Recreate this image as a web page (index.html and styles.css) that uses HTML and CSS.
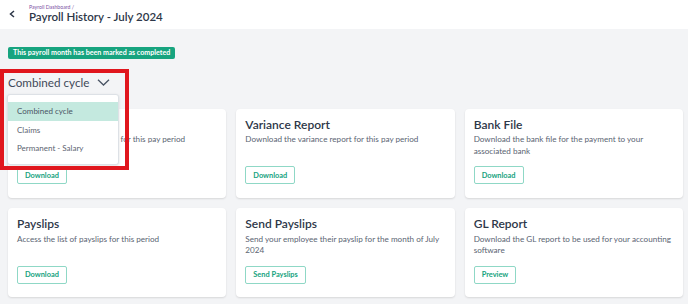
FILE: index.html
```html
<!DOCTYPE html>
<html lang="en">
<head>
  <meta charset="UTF-8" />
  <title>Payroll History - July 2024</title>
  <link rel="stylesheet" href="styles.css">
</head>
<body>
  <header class="topbar">
    <span class="back">
      <svg width="7" height="8" viewBox="0 0 7 8"><path d="M5 1 L1.5 4 L5 7" fill="none" stroke="#2d3748" stroke-width="1.5"/></svg>
    </span>
    <div class="heading">
      <div class="crumb">Payroll Dashboard /</div>
      <h1>Payroll History - July 2024</h1>
    </div>
  </header>

  <main class="content">
    <div class="badge">This payroll month has been marked as completed</div>

    <div class="cycle">
      <div class="cycle-label">
        Combined cycle
        <svg width="13" height="7" viewBox="0 0 13 7"><path d="M1 0.8 L6.5 6 L12 0.8" fill="none" stroke="#4a5565" stroke-width="1.3"/></svg>
      </div>
      <ul class="menu">
        <li class="active">Combined cycle</li>
        <li>Claims</li>
        <li>Permanent - Salary</li>
      </ul>
      <div class="mark"></div>
    </div>

    <section class="cards">
      <div class="card">
        <h2>Payroll Record</h2>
        <p>Download the payroll record for this pay period</p>
        <button>Download</button>
      </div>
      <div class="card">
        <h2>Variance Report</h2>
        <p>Download the variance report for this pay period</p>
        <button>Download</button>
      </div>
      <div class="card">
        <h2>Bank File</h2>
        <p>Download the bank file for the payment to your associated bank</p>
        <button>Download</button>
      </div>
      <div class="card">
        <h2>Payslips</h2>
        <p>Access the list of payslips for this period</p>
        <button>Download</button>
      </div>
      <div class="card">
        <h2>Send Payslips</h2>
        <p>Send your employee their payslip for the month of July 2024</p>
        <button>Send Payslips</button>
      </div>
      <div class="card">
        <h2>GL Report</h2>
        <p>Download the GL report to be used for your accounting software</p>
        <button>Preview</button>
      </div>
    </section>
  </main>
</body>
</html>
```

FILE: styles.css
```css
body {
  margin: 0;
  font-family: Lato, "Open Sans", sans-serif;
  background: #f3f4f6;
  color: #2d3748;
}
.topbar {
  display: flex;
  align-items: flex-start;
  height: 29px;
  background: #fff;
  padding-left: 9px;
  box-sizing: border-box;
}
.back {
  width: 20px;
  padding-top: 10px;
  line-height: 0;
}
.heading {
  padding-top: 4px;
}
.crumb {
  font-size: 5.2px;
  line-height: 6px;
  color: #7a4fa3;
}
h1 {
  margin: 0;
  font-size: 11.5px;
  line-height: 14px;
  font-weight: 600;
  color: #2d3748;
}
.content {
  padding: 18px 5px 8px 8px;
}
.badge {
  width: fit-content;
  background: #17a47f;
  color: #fff;
  font-size: 7.1px;
  font-weight: 700;
  line-height: 12px;
  padding: 0 5px;
  border-radius: 2px;
}
.cycle {
  position: relative;
  height: 20px;
  margin: 13px 0 16.5px;
}
.cycle-label {
  display: flex;
  align-items: center;
  gap: 8px;
  font-size: 11.7px;
  line-height: 20px;
  color: #3f4a59;
}
.menu {
  position: absolute;
  left: -1px;
  top: 22px;
  z-index: 2;
  width: 112px;
  margin: 0;
  padding: 7px 0 6px;
  list-style: none;
  background: #fff;
  border: 1px solid #dde1e6;
  border-radius: 3px;
  box-shadow: 0 1px 3px rgba(0,0,0,0.12);
  box-sizing: border-box;
}
.menu li {
  height: 18.7px;
  line-height: 18.7px;
  padding-left: 9px;
  font-size: 8px;
  color: #5c6470;
}
.menu li.active {
  background: #c4e9df;
  color: #4a5565;
}
.mark {
  position: absolute;
  left: -8px;
  top: -3px;
  width: 129px;
  height: 101px;
  border: 4px solid #e0161d;
  box-sizing: border-box;
  z-index: 3;
}
.cards {
  display: grid;
  grid-template-columns: repeat(3, 1fr);
  column-gap: 10px;
  row-gap: 10.5px;
}
.card {
  background: #fff;
  border-radius: 4px;
  box-shadow: 0 1px 2px rgba(0,0,0,0.12);
  padding: 8px 5px 13.4px 9px;
  display: flex;
  flex-direction: column;
  align-items: flex-start;
}
.card h2 {
  margin: 0;
  font-size: 12px;
  line-height: 16px;
  font-weight: 600;
  color: #2d3748;
}
.card p {
  margin: 1.75px 0 0;
  min-height: 23px;
  font-size: 8.15px;
  line-height: 11.5px;
  color: #5a6472;
}
.card button {
  margin-top: 9px;
  height: 18px;
  padding: 0 7px;
  background: #fff;
  border: 1px solid #8fd8c6;
  border-radius: 2px;
  color: #15a27e;
  font-family: inherit;
  font-size: 7.4px;
  font-weight: 700;
}
```
